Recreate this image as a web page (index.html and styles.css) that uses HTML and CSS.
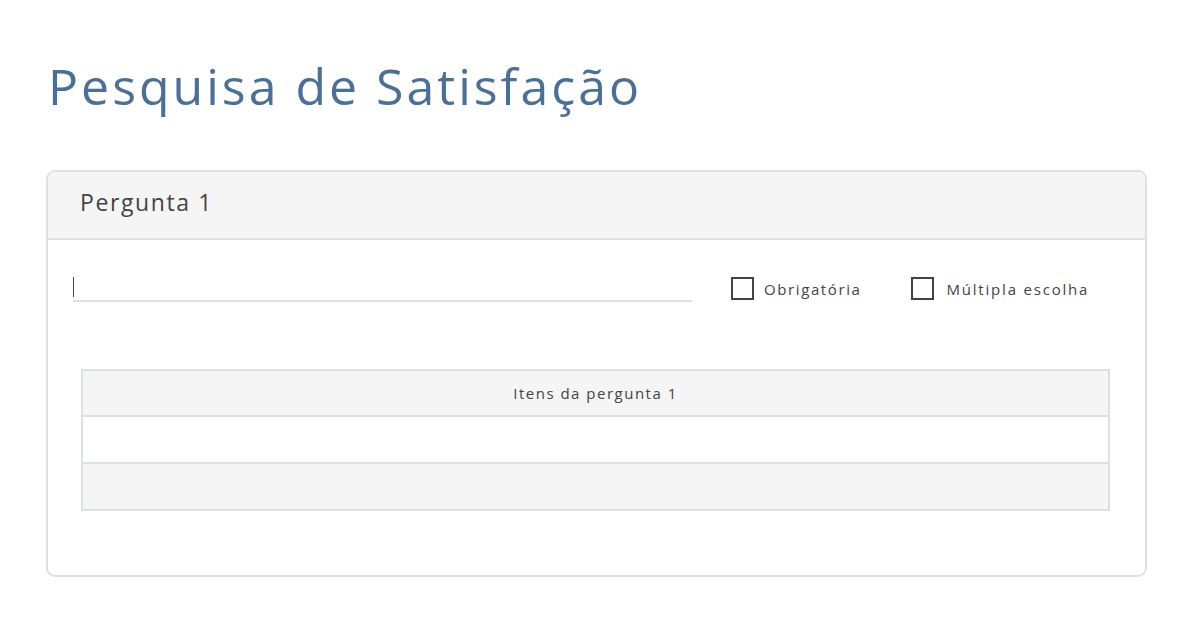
FILE: index.html
```html
<!DOCTYPE html>
<html lang="pt">
<head>
<meta charset="utf-8">
<title>Pesquisa de Satisfação</title>
<link rel="stylesheet" href="styles.css">
</head>
<body>
<main class="page">
  <h1 class="title">Pesquisa de Satisfação</h1>
  <section class="card">
    <header class="card-header">Pergunta 1</header>
    <div class="card-body">
      <div class="question-row">
        <div class="text-input"><span class="caret"></span></div>
        <label class="check"><span class="box"></span><span class="check-label">Obrigatória</span></label>
        <label class="check"><span class="box"></span><span class="check-label wide">Múltipla escolha</span></label>
      </div>
      <div class="items-table">
        <div class="row head">Itens da pergunta 1</div>
        <div class="row white"></div>
        <div class="row grey"></div>
      </div>
    </div>
  </section>
</main>
</body>
</html>
```
FILE: styles.css
```css
* { box-sizing: border-box; }
html, body { margin: 0; padding: 0; background: #fff; }
body { font-family: "Open Sans", "Liberation Sans", sans-serif; color: #444; }
.page { padding: 54px 54px 0 46px; }
.title {
  margin: 0 0 0 2px;
  font-size: 50px;
  font-weight: 400;
  color: #4a6f99;
  letter-spacing: 3px;
  line-height: 64px;
}
.card {
  margin-top: 52px;
  width: 1101px;
  height: 407px;
  border: 2px solid #dde1e3;
  border-radius: 9px;
  background: #fff;
  overflow: hidden;
}
.card-header {
  height: 68px;
  background: #f5f5f5;
  border-bottom: 2px solid #dde1e3;
  padding: 14px 0 0 32px;
  font-size: 23px;
  line-height: 32px;
  color: #444;
  letter-spacing: 1.6px;
}
.card-body { padding: 36px 0 0 25px; }
.question-row { display: flex; align-items: flex-start; height: 93px; }
.text-input {
  width: 619px;
  height: 26px;
  border-bottom: 2px solid #dde1e3;
  position: relative;
}
.caret {
  display: block;
  width: 1px;
  height: 20px;
  background: #444;
  margin-top: 1px;
}
.check { display: flex; align-items: center; margin-top: 1px; }
.check:first-of-type { margin-left: 39px; }
.check + .check { margin-left: 50px; }
.box {
  width: 23px;
  height: 23px;
  border: 2px solid #444;
  margin-right: 10px;
  background: #fff;
}
.check-label { font-size: 15px; letter-spacing: 1.6px; color: #444; }
.check-label.wide { letter-spacing: 1.8px; margin-left: 2px; }
.items-table {
  margin-left: 8px;
  width: 1029px;
  border: 2px solid #dde1e3;
  border-bottom: none;
}
.row {
  height: 47px;
  border-bottom: 2px solid #dde1e3;
}
.row.head {
  background: #f5f5f5;
  text-align: center;
  font-size: 15px;
  line-height: 44px;
  letter-spacing: 1.5px;
  height: 46px;
}
.row.white { background: #fff; }
.row.grey { background: #f5f5f5; }
```
